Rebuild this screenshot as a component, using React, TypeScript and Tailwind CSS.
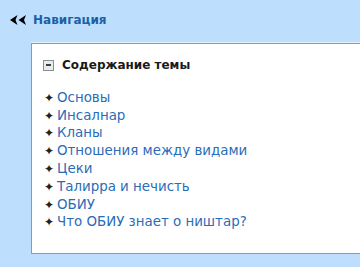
import React from 'react';

const items = [
  'Основы',
  'Инсалнар',
  'Кланы',
  'Отношения между видами',
  'Цеки',
  'Талирра и нечисть',
  'ОБИУ',
  'Что ОБИУ знает о ништар?',
];

const Arrows = () => (
  <svg width="17" height="10" viewBox="0 0 17 10" className="mr-[6px]">
    <path d="M0 5 L7.5 0 L5.5 5 L7.5 10 Z" fill="#000" />
    <path d="M8.5 5 L16 0 L14 5 L16 10 Z" fill="#000" />
  </svg>
);

const App = () => {
  return (
    <div className="w-[360px] h-[267px] overflow-hidden bg-[#bddffd] font-['DejaVu_Sans',sans-serif]">
      <div className="flex items-center h-[38px] pl-[10px] pt-[1px]">
        <Arrows />
        <a className="text-[#1b5fa8] text-[12px] font-bold">Навигация</a>
      </div>
      <div className="ml-[31px] mt-[5px] w-[340px] h-[211px] bg-white border border-[#6aa6c8] border-r-0 shadow-[0_-1px_0_#e3f1fd]">
        <div className="flex items-center pl-[11px] pt-[12px]">
          <span className="w-[11px] h-[11px] border border-[#8a9090] bg-[#e8ecec] flex items-center justify-center">
            <span className="w-[5px] h-[2px] bg-[#3a3f3f]" />
          </span>
          <span className="ml-[8px] text-[12px] font-bold text-[#1a1a1a]">Содержание темы</span>
        </div>
        <ul className="mt-[15px] pl-[12px]">
          {items.map((t) => (
            <li key={t} className="flex items-center h-[17.8px] text-[13.4px]">
              <span className="text-[#222] text-[12px] w-[13px] leading-none">✦</span>
              <a className="text-[#2a6cb8]">{t}</a>
            </li>
          ))}
        </ul>
      </div>
    </div>
  );
};

export default App;
